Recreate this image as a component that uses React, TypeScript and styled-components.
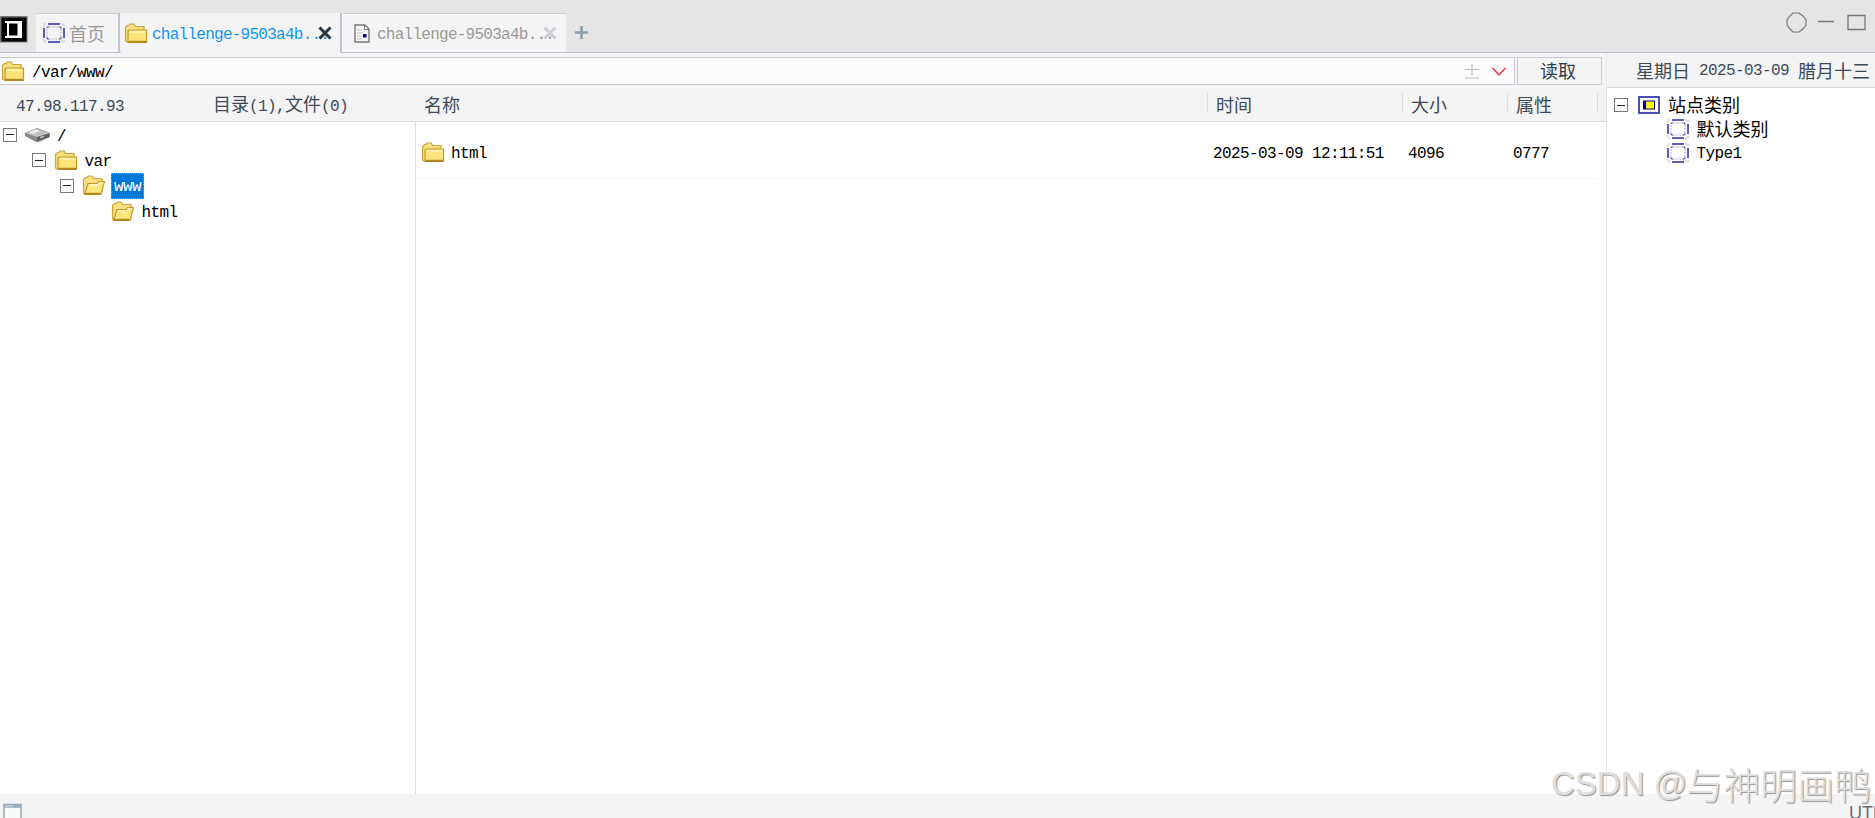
import React from 'react';
import styled, { createGlobalStyle } from 'styled-components';

const GlobalStyle = createGlobalStyle`
  * {
    box-sizing: border-box;
  }

  body {
    margin: 0;
    overflow: hidden;
    background: #fff;
    color: #000;
    font-family: 'Liberation Mono', 'Noto Sans CJK SC', monospace;
    font-size: 16px;
    letter-spacing: -0.61px;
    line-height: 18px;
  }
`;

const Window = styled.div`
  display: flex;
  flex-direction: column;
  width: 1875px;
  height: 818px;
  overflow: hidden;
`;

const Cjk = styled.span`
  font-family: 'Noto Sans CJK SC', sans-serif;
  font-size: 18px;
  font-weight: 400;
  letter-spacing: 0;
  line-height: 18px;
`;

const TitleBar = styled.header`
  display: flex;
  flex: none;
  height: 53px;
  background: #e5e5e5;
`;

const LogoCell = styled.div`
  width: 36px;
  padding-top: 16px;
  border-bottom: 1px solid #bfbdd0;

  svg {
    display: block;
  }
`;

const Tab = styled.div<{ $width: number; $indent: number; $active?: boolean }>`
  display: flex;
  align-items: center;
  width: ${({ $width }) => $width}px;
  height: 40px;
  margin-top: 13px;
  padding-left: ${({ $indent }) => $indent}px;
  white-space: pre;
  color: ${({ $active }) => ($active ? '#1296ee' : '#999')};
  background: #f4f4f4;
  border-top: 1px solid ${({ $active }) => ($active ? '#f4f4f4' : '#cccad6')};
  border-bottom: 1px solid ${({ $active }) => ($active ? '#f4f4f4' : '#bfbdd0')};

  svg {
    flex: none;
  }
`;

const TabDivider = styled.div`
  width: 3px;
  height: 40px;
  margin-top: 13px;
  background: #f4f4f4;
  border-left: 2px solid #c3c1d3;
  border-bottom: 1px solid #bfbdd0;
`;

const HomeLabel = styled.span`
  padding: 3px 0 0 4px;
`;

const TabLabel = styled.span<{ $gap: number }>`
  width: 166px;
  margin-left: ${({ $gap }) => $gap}px;
  padding-top: 3px;
  letter-spacing: -0.74px;
`;

const TitleRest = styled.div`
  display: flex;
  flex: 1;
  justify-content: space-between;
  border-bottom: 1px solid #bfbdd0;

  svg {
    display: block;
  }
`;

const AddTab = styled.div`
  padding: 26px 0 0 9px;
`;

const WindowControls = styled.div`
  display: flex;
  align-items: center;
  gap: 11px;
  height: 44px;
  padding-right: 9px;

  svg:last-child {
    margin-left: 2px;
  }
`;

const Body = styled.div`
  display: flex;
  flex: 1;
  min-height: 0;
`;

const Main = styled.main`
  display: flex;
  flex-direction: column;
  width: 1606px;
`;

const AddressRow = styled.div`
  display: flex;
  flex: none;
  gap: 2px;
  height: 32px;
  padding-top: 4px;
  background: #f4f4f4;
`;

const AddressBar = styled.div`
  display: flex;
  align-items: center;
  width: 1515px;
  padding: 0 7px 0 1px;
  background: #fbfbfb;
  border: 1px solid #cac8d6;
  border-left: 0;
`;

const Path = styled.span`
  flex: 1;
  padding: 4px 0 0 7px;
`;

const ReadButton = styled.button`
  width: 85px;
  padding: 1px 3px 0 0;
  font-family: inherit;
  color: #2f3e4b;
  background: #f4f4f4;
  border: 1px solid #cac8d6;
`;

const HeaderRow = styled.div`
  display: flex;
  flex: none;
  align-items: center;
  height: 37px;
  color: #3c4a57;
  background: #f4f4f4;
  border-bottom: 1px solid #d8d8d8;
`;

const SiteInfo = styled.div`
  display: flex;
  align-items: baseline;
  width: 416px;
  padding: 3px 0 0 16px;
`;

const Host = styled.span`
  width: 197px;
`;

const Column = styled.div<{ $width: number }>`
  display: flex;
  align-items: center;
  width: ${({ $width }) => $width}px;
  height: 20px;
  padding: 1px 0 0 8px;
  border-right: 1px solid #dedede;
`;

const Panes = styled.div`
  display: flex;
  flex: 1;
`;

const TreePane = styled.div`
  width: 416px;
  border-right: 1px solid #dedede;
`;

const TreeRow = styled.div<{ $level: number; $height?: number }>`
  display: flex;
  align-items: center;
  height: ${({ $height }) => $height ?? 25.5}px;
  padding-left: ${({ $level }) => 3 + $level * 28.5}px;

  svg {
    flex: none;
  }
`;

const Toggle = styled.span<{ $hidden?: boolean }>`
  display: flex;
  align-items: center;
  justify-content: center;
  width: 14px;
  height: 14px;
  margin-right: 8px;
  border: 1px solid #777;
  visibility: ${({ $hidden }) => ($hidden ? 'hidden' : 'visible')};

  &::after {
    content: '';
    width: 8px;
    height: 1px;
    background: #222;
  }
`;

const NodeLabel = styled.span<{ $selected?: boolean }>`
  margin-left: ${({ $selected }) => ($selected ? 5 : 7)}px;
  padding: ${({ $selected }) => ($selected ? '4px 2px 2px' : '4px 0 0')};
  color: ${({ $selected }) => ($selected ? '#fff' : '#000')};
  background: ${({ $selected }) => ($selected ? '#0078d7' : 'none')};
  border: ${({ $selected }) => ($selected ? '1px dotted #e88432' : '0')};
`;

const FileList = styled.div`
  flex: 1;
`;

const FileRow = styled.div`
  display: flex;
  align-items: center;
  width: 1182px;
  height: 57px;
  padding: 4px 0 0 5px;
  border-bottom: 1px solid #f6f6f6;
`;

const FileCell = styled.div<{ $width: number }>`
  display: flex;
  align-items: center;
  gap: 6px;
  width: ${({ $width }) => $width}px;
`;

const CellText = styled.span`
  padding-top: 4px;
`;

const SidePanel = styled.aside`
  flex: 1;
  border-left: 1px solid #e4e4e4;
`;

const DateBar = styled.div`
  display: flex;
  align-items: center;
  height: 35px;
  padding: 0 0 1px 29px;
  color: #3c4a57;
  white-space: nowrap;
  background: #f4f4f4;
  border-bottom: 1px solid #d8d8d8;
`;

const CalendarDate = styled.span`
  margin: 0 9px;
  padding-top: 2px;
`;

const CategoryTree = styled.div`
  padding: 5px 0 0 4px;

  ${Toggle} {
    margin-right: 10px;
  }

  ${NodeLabel} {
    margin-left: 8px;
    padding-top: 2px;
  }
`;

const StatusBar = styled.footer`
  display: flex;
  flex: none;
  justify-content: space-between;
  height: 24px;
  padding: 9px 0 0 3px;
  overflow: hidden;
  background: #f4f4f4;
`;

const Encoding = styled.span`
  width: 26px;
  overflow: hidden;
  color: #6f6875;
  font-family: 'Liberation Sans', sans-serif;
  font-size: 18px;
  letter-spacing: 0;
  line-height: 20px;
  white-space: nowrap;
`;

const Watermark = styled.div`
  position: absolute;
  top: 761px;
  left: 1551px;
  display: flex;
  align-items: center;
  height: 46px;
  color: #dedede;
  font-family: 'Liberation Sans', sans-serif;
  font-size: 33px;
  letter-spacing: 0;
  line-height: 46px;
  white-space: pre;
  text-shadow: 1px 1px 1px #929292;
`;

const WatermarkName = styled.span`
  margin-left: -1px;
  font-family: 'Noto Sans CJK SC', sans-serif;
  font-size: 37px;
  font-weight: 300;
`;

const FolderIcon = ({ open }: { open?: boolean }) => (
  <svg width="24" height="21" viewBox="0 0 24 21">
    <path
      d="M1.5 18V4.5L3.5 2.5H5l1-1.5h4l1.5 2.5H20v13L18 19H3z"
      fill="#f6df80"
      stroke="#c9a53c"
      strokeWidth="1.2"
    />
    {open ? (
      <path d="M2.5 19.5L6 8.5h9l1.5-2h6L19 19.5z" fill="#ffe57c" stroke="#c39a2a" strokeWidth="1.2" />
    ) : (
      <path d="M4 19.5V8l1-1h17.5v12.5z" fill="#ffe27a" stroke="#c39a2a" strokeWidth="1.2" />
    )}
    <path d={open ? 'M7 10h9l1.5-2h3' : 'M6 9h15'} fill="none" stroke="#fff6bd" strokeWidth="1.5" />
    <path d={open ? 'M3 18.8h15.5' : 'M4.5 18.8h17.5'} stroke="#b58519" strokeWidth="2" />
  </svg>
);

const DriveIcon = () => (
  <svg width="25" height="16" viewBox="0 0 25 16">
    <path d="M0 6L12 1l13 5v4l-11 5h-3L0 9z" fill="#898989" />
    <path d="M1 6l11-4 12 4-12 4z" fill="#c4c4c4" />
    <path d="M4 5l7-3 4 2-8 3z" fill="#ededed" />
    <path d="M12 10v4l12-4V7z" fill="#5e5e5e" />
    <path d="M15 10.5l4-1" stroke="#eee" />
  </svg>
);

const CategoryIcon = () => (
  <svg width="22" height="20" viewBox="0 0 22 20" fill="none">
    <path d="M1 4V1h3M18 1h3v3M1 16v3h3M18 19h3v-3" stroke="#bbb" strokeDasharray="2 1" />
    <path d="M5 1h12M5 19h12M1 5v10M21 5v10" stroke="#2929a5" strokeWidth="1.5" />
    <path d="M4 5V4h2M16 4h2v2M4 14v2h2M16 16h2v-2" stroke="#5050b5" />
    <path d="M6 4h10M6 16h10M4 6v8M18 6v8" stroke="#b9b9b9" strokeDasharray="2 1" />
  </svg>
);

const RootCategoryIcon = () => (
  <svg width="22" height="18" viewBox="0 0 22 18">
    <rect x="1" y="1" width="20" height="16" fill="#fff" stroke="#2323a8" strokeWidth="1.6" />
    <rect x="5" y="4.5" width="12" height="9" fill="#00008b" />
    <rect x="8" y="5.5" width="8" height="7" fill="#ff0" />
  </svg>
);

const DocumentIcon = () => (
  <svg width="16" height="19" viewBox="0 0 16 19" fill="none">
    <path d="M1 1h10l4 4v13H1z" fill="#f8f8f8" stroke="#777" strokeWidth="1.4" />
    <path d="M10.5 1v4.5H15" stroke="#777" />
    <path d="M3 6h5M3 9h6M3 12h5M3 15h5" stroke="#bbb" />
    <rect x="9" y="10" width="3.5" height="3.5" fill="#00009c" />
  </svg>
);

const CloseIcon = ({ color }: { color: string }) => (
  <svg width="14" height="14" viewBox="0 0 14 14">
    <path d="M1.5 1.5l11 11M12.5 1.5l-11 11" stroke={color} strokeWidth="3" />
  </svg>
);

const App: React.FC = () => {
  return (
    <Window>
      <GlobalStyle />
      <TitleBar>
        <LogoCell>
          <svg width="28" height="27" viewBox="0 0 28 27">
            <path d="M0 0h27.5v26.5H0z" fill="#777" />
            <path d="M1.5 1.5h25v24h-25z" fill="#000" />
            <path d="M5 5h17v17H5v-2h2V7H5z" fill="#fff" />
            <path d="M9 7.5h8.5v12H9z" fill="#000" />
          </svg>
        </LogoCell>
        <Tab $width={82} $indent={7}>
          <CategoryIcon />
          <HomeLabel>
            <Cjk>首页</Cjk>
          </HomeLabel>
        </Tab>
        <TabDivider />
        <Tab $width={219} $indent={3} $active>
          <FolderIcon />
          <TabLabel $gap={4}>challenge-9503a4b...</TabLabel>
          <CloseIcon color="#2b3740" />
        </Tab>
        <TabDivider />
        <Tab $width={223} $indent={11}>
          <DocumentIcon />
          <TabLabel $gap={7}>challenge-9503a4b...</TabLabel>
          <CloseIcon color="#cdcdd7" />
        </Tab>
        <TitleRest>
          <AddTab>
            <svg width="13" height="13" viewBox="0 0 13 13">
              <path d="M0 6.5h13M6.5 0v13" stroke="#8ca0aa" strokeWidth="2.6" />
            </svg>
          </AddTab>
          <WindowControls>
            <svg width="21" height="21" viewBox="0 0 21 21">
              <path d="M7 1h6l4 3 3 4v5l-3 4-4 3H7l-3-3-3-4V8l3-4z" fill="none" stroke="#777" strokeWidth="1.2" />
            </svg>
            <svg width="16" height="20" viewBox="0 0 16 20">
              <path d="M0 9.5h16" stroke="#777" strokeWidth="1.5" />
            </svg>
            <svg width="19" height="17" viewBox="0 0 19 17">
              <path d="M1 1.5h17v14H1z" fill="none" stroke="#777" strokeWidth="1.3" />
            </svg>
          </WindowControls>
        </TitleRest>
      </TitleBar>

      <Body>
        <Main>
          <AddressRow>
            <AddressBar>
              <FolderIcon />
              <Path>/var/www/</Path>
              <svg width="42" height="16" viewBox="0 0 42 16" fill="none">
                <path d="M0 6.5h14M7 1v11M0 15h14" stroke="#bbb" strokeWidth="1.2" />
                <path d="M27.5 5l6.5 7 6.5-7" stroke="#f33" strokeWidth="1.5" />
              </svg>
            </AddressBar>
            <ReadButton>
              <Cjk>读取</Cjk>
            </ReadButton>
          </AddressRow>
          <HeaderRow>
            <SiteInfo>
              <Host>47.98.117.93</Host>
              <span>
                <Cjk>目录</Cjk>(1),<Cjk>文件</Cjk>(0)
              </span>
            </SiteInfo>
            <Column $width={792}>
              <Cjk>名称</Cjk>
            </Column>
            <Column $width={195}>
              <Cjk>时间</Cjk>
            </Column>
            <Column $width={105}>
              <Cjk>大小</Cjk>
            </Column>
            <Column $width={90}>
              <Cjk>属性</Cjk>
            </Column>
          </HeaderRow>
          <Panes>
            <TreePane>
              <TreeRow $level={0}>
                <Toggle />
                <DriveIcon />
                <NodeLabel>/</NodeLabel>
              </TreeRow>
              <TreeRow $level={1}>
                <Toggle />
                <FolderIcon />
                <NodeLabel>var</NodeLabel>
              </TreeRow>
              <TreeRow $level={2}>
                <Toggle />
                <FolderIcon open />
                <NodeLabel $selected>www</NodeLabel>
              </TreeRow>
              <TreeRow $level={3}>
                <Toggle $hidden />
                <FolderIcon open />
                <NodeLabel>html</NodeLabel>
              </TreeRow>
            </TreePane>
            <FileList>
              <FileRow>
                <FileCell $width={792}>
                  <FolderIcon />
                  <CellText>html</CellText>
                </FileCell>
                <FileCell $width={195}>
                  <CellText>2025-03-09 12:11:51</CellText>
                </FileCell>
                <FileCell $width={105}>
                  <CellText>4096</CellText>
                </FileCell>
                <FileCell $width={80}>
                  <CellText>0777</CellText>
                </FileCell>
              </FileRow>
            </FileList>
          </Panes>
        </Main>

        <SidePanel>
          <DateBar>
            <Cjk>星期日</Cjk>
            <CalendarDate>2025-03-09</CalendarDate>
            <Cjk>腊月十三</Cjk>
          </DateBar>
          <CategoryTree>
            <TreeRow $level={0} $height={24}>
              <Toggle />
              <RootCategoryIcon />
              <NodeLabel>
                <Cjk>站点类别</Cjk>
              </NodeLabel>
            </TreeRow>
            <TreeRow $level={1} $height={24}>
              <Toggle $hidden />
              <CategoryIcon />
              <NodeLabel>
                <Cjk>默认类别</Cjk>
              </NodeLabel>
            </TreeRow>
            <TreeRow $level={1} $height={24}>
              <Toggle $hidden />
              <CategoryIcon />
              <NodeLabel>Type1</NodeLabel>
            </TreeRow>
          </CategoryTree>
        </SidePanel>
      </Body>

      <StatusBar>
        <svg width="19" height="22" viewBox="0 0 19 22">
          <path d="M1 1.5h17V22H1z" fill="#fafafa" stroke="#91a8b6" strokeWidth="1.5" />
          <path d="M1 3.5h17" stroke="#91a8b6" strokeWidth="2.5" />
          <path d="M2 3h8" stroke="#d5e0e8" />
        </svg>
        <Encoding>UTF-8</Encoding>
      </StatusBar>

      <Watermark>
        CSDN @<WatermarkName>与神明画鸭</WatermarkName>
      </Watermark>
    </Window>
  );
};

export default App;
